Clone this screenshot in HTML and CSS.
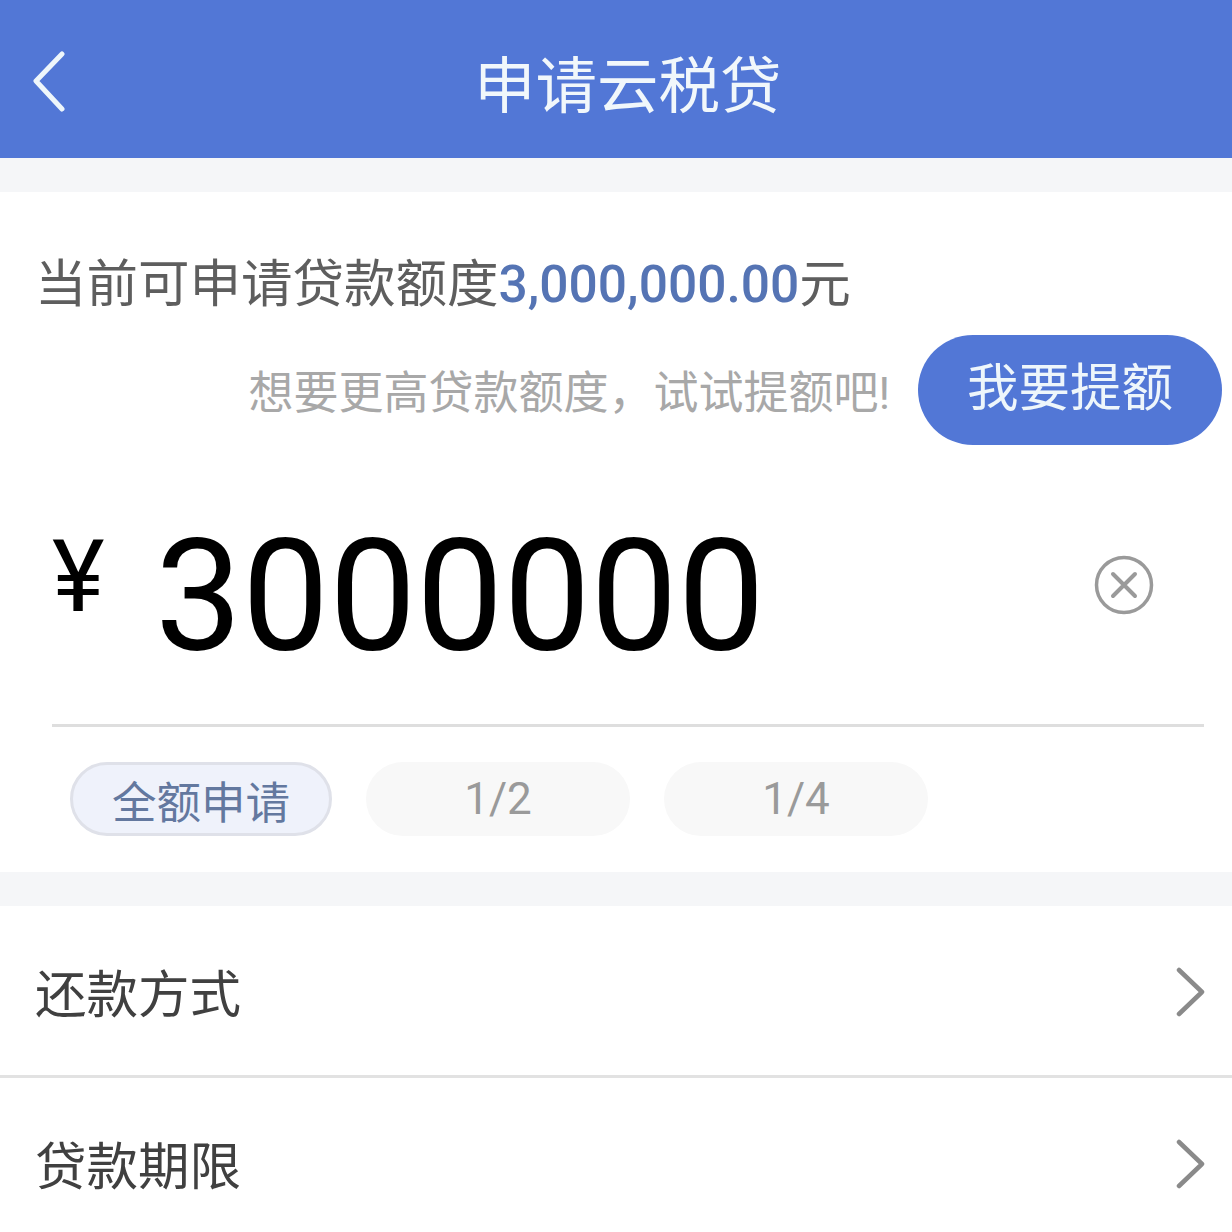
FILE: index.html
```html
<!DOCTYPE html>
<html lang="zh-CN">
<head>
<meta charset="utf-8">
<title>申请云税贷</title>
<link rel="stylesheet" href="styles.css">
</head>
<body>
<div class="page">
  <header class="topbar">
    <svg class="back" viewBox="0 0 34 64" width="34" height="64"><path d="M30 3 L4 30 L30 58" fill="none" stroke="#eef6fb" stroke-width="5" stroke-linecap="round" stroke-linejoin="round"/></svg>
    <h1 class="title">申请云税贷</h1>
  </header>
  <section class="card">
    <p class="quota">当前可申请贷款额度<span class="quota-num">3,000,000.00</span>元</p>
    <div class="raise">
      <span class="raise-tip">想要更高贷款额度&#xFF0C;试试提额吧!</span>
      <span class="raise-btn">我要提额</span>
    </div>
    <div class="amount">
      <span class="yen">¥</span>
      <span class="value">3000000</span>
      <svg class="clear" viewBox="0 0 60 60" width="60" height="60"><circle cx="30" cy="30" r="27.5" fill="none" stroke="#9a9a9a" stroke-width="3.5"/><path d="M19 19 L41 41 M41 19 L19 41" fill="none" stroke="#9a9a9a" stroke-width="4" stroke-linecap="round"/></svg>
    </div>
    <div class="pills">
      <span class="pill pill-on">全额申请</span>
      <span class="pill">1/2</span>
      <span class="pill">1/4</span>
    </div>
  </section>
  <section class="list">
    <div class="row">
      <span>还款方式</span>
      <svg class="chev" viewBox="0 0 30 50" width="30" height="50"><path d="M3 3 L26 25 L3 47" fill="none" stroke="#8a8a8a" stroke-width="4.5" stroke-linecap="round" stroke-linejoin="round"/></svg>
    </div>
    <div class="row">
      <span>贷款期限</span>
      <svg class="chev" viewBox="0 0 30 50" width="30" height="50"><path d="M3 3 L26 25 L3 47" fill="none" stroke="#8a8a8a" stroke-width="4.5" stroke-linecap="round" stroke-linejoin="round"/></svg>
    </div>
  </section>
</div>
</body>
</html>
```
FILE: styles.css
```css
* { box-sizing: border-box; }
html, body { margin: 0; padding: 0; height: 100%; overflow: hidden; background: #fff; }
body { font-family: Roboto, "Noto Sans CJK SC", sans-serif; }
.page { width: 1232px; height: 1232px; overflow: hidden; background: #f5f6f8; }

.topbar { height: 158px; background: #5277d6; display: flex; align-items: center; padding-left: 32px; }
.back { flex: none; margin-top: 8px; margin-right: 408px; }
.title { margin: 18px 0 0; flex: none; font-size: 61.5px; font-weight: 400; color: #f1f7fb; line-height: 1; white-space: nowrap; }

.card { margin-top: 34px; height: 680px; background: #fff; display: flex; flex-direction: column; }
.quota { margin: 0; padding: 66px 0 0 35px; font-size: 51.5px; line-height: 54px; color: #5e5e5e; white-space: nowrap; }
.quota-num { color: #5574b4; font-weight: 500; }

.raise { margin-top: 23px; padding-right: 10px; display: flex; align-items: center; justify-content: flex-end; gap: 28px; }
.raise-tip { font-size: 45px; color: #a8a8a8; white-space: nowrap; margin-top: -2px; }
.raise-btn { width: 304px; height: 110px; padding-bottom: 14px; border-radius: 55px; background: #5277d6; color: #eef6fb; font-size: 51.5px; display: flex; align-items: center; justify-content: center; }

.amount { margin-top: 62px; height: 180px; display: flex; align-items: center; padding-left: 52px; }
.yen { width: 103px; font-size: 100px; line-height: 1; color: #000; align-self: flex-start; margin-top: 20px; flex: none; }
.value { font-size: 155px; line-height: 180px; color: #000; margin-top: -2px; }
.clear { margin-left: auto; margin-right: 78px; margin-top: -24px; flex: none; }

.pills { margin: 37px 28px 0 52px; padding: 35px 0 0 18px; border-top: 3px solid #dedede; display: flex; gap: 34px; }
.pill { width: 264px; height: 74px; border-radius: 37px; background: #f8f8f8; color: #9a9a9a; font-size: 44px; display: flex; align-items: center; justify-content: center; }
.pill-on { width: 262px; font-size: 44.5px; background: #eff2fb; border: 3px solid #dfe1e9; color: #63789f; }

.list { margin-top: 34px; background: #fff; }
.row { height: 172px; padding: 0 26px 0 35px; display: flex; align-items: center; justify-content: space-between; font-size: 51.5px; color: #404040; border-bottom: 3px solid #e2e2e2; }
.chev { flex: none; margin-top: 2px; }
```
